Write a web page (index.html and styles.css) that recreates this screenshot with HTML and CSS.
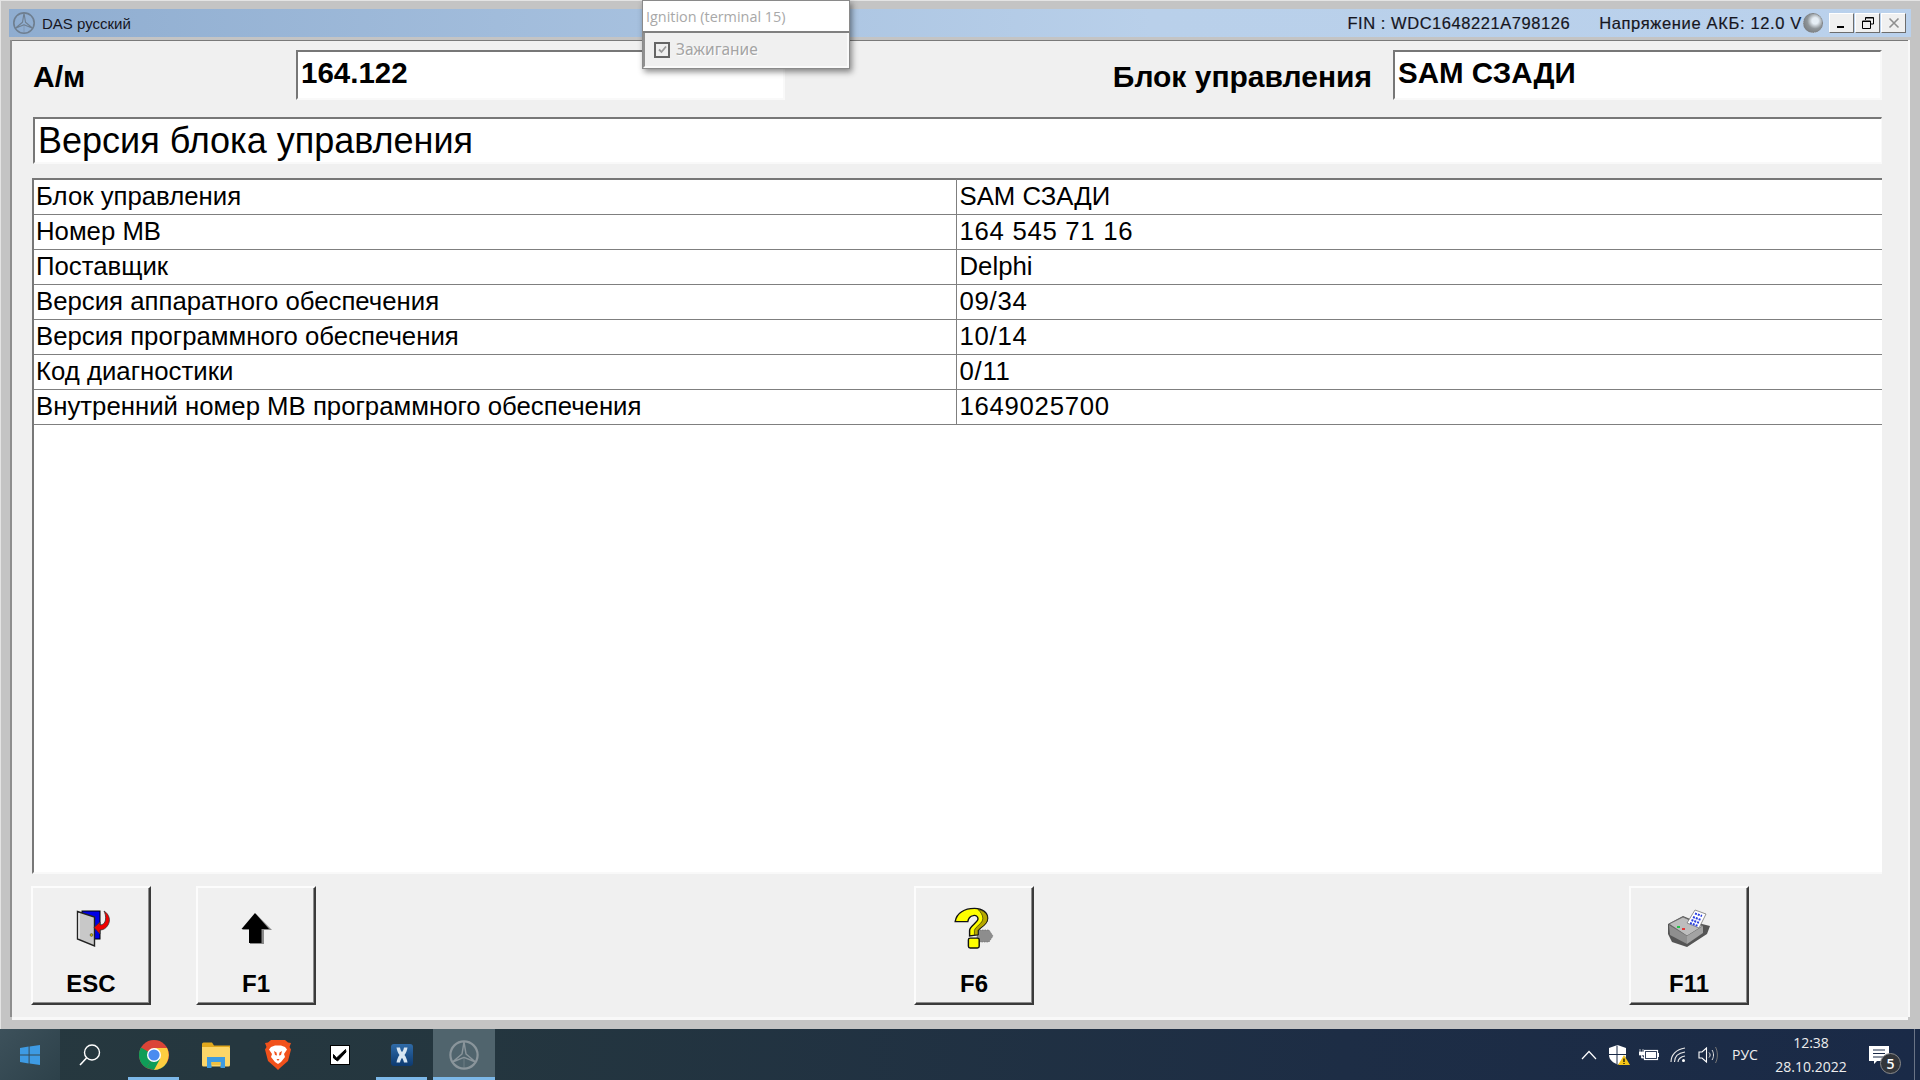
FILE: index.html
```html
<!DOCTYPE html>
<html lang="ru">
<head>
<meta charset="utf-8">
<title>DAS русский</title>
<link rel="stylesheet" href="styles.css">
</head>
<body>
<svg class="defs" width="0" height="0" aria-hidden="true">
  <defs>
    <symbol id="mb" viewBox="0 0 32 32">
      <circle cx="16" cy="16" r="13.6" fill="none" stroke="currentColor" stroke-width="2.2"/>
      <path d="M16 3 L18 15 L27.5 23 L16 18.4 L4.5 23 L14 15 Z" fill="none" stroke="currentColor" stroke-width="1.5" stroke-linejoin="round"/>
      <path d="M16 18.4 V29" stroke="currentColor" stroke-width="1" opacity=".5"/>
    </symbol>
    <linearGradient id="xblue" x1="0" y1="0" x2="0" y2="1">
      <stop offset="0" stop-color="#2f6ba8"/>
      <stop offset="1" stop-color="#0d3a70"/>
    </linearGradient>
  </defs>
</svg>
<div class="window">
  <div class="titlebar">
    <svg class="tb-logo"><use href="#mb"/></svg>
    <span class="tb-title">DAS русский</span>
    <span class="tb-fin">FIN : WDC1648221A798126</span>
    <span class="tb-volt">Напряжение АКБ: 12.0 V</span>
    <span class="tb-gear"></span>
    <div class="win-btns">
      <button class="win-btn"><svg width="12" height="12" viewBox="0 0 12 12"><rect x="1" y="9" width="7" height="2" fill="#000"/></svg></button>
      <button class="win-btn"><svg width="14" height="14" viewBox="0 0 14 14"><path d="M4.5 4V1.5H12.5V8H10M1.5 5H9.5V12.5H1.5Z M1.5 5.5H9.5 M4.5 2H12.5" fill="none" stroke="#000" stroke-width="1"/></svg></button>
      <button class="win-btn win-btn-off"><svg width="12" height="12" viewBox="0 0 12 12"><path d="M1.5 1.5L10.5 10.5M10.5 1.5L1.5 10.5" stroke="#8f8f8f" stroke-width="1.6"/></svg></button>
    </div>
  </div>

  <main class="content">
    <div class="head-row">
      <div class="head-label head-label-car">А/м</div>
      <div class="field field-car">164.122</div>
      <div class="head-label head-label-unit">Блок управления</div>
      <div class="field field-unit">SAM СЗАДИ</div>
    </div>
    <h1 class="page-title">Версия блока управления</h1>
    <div class="table-box">
      <table class="data">
        <tr><td>Блок управления</td><td>SAM СЗАДИ</td></tr>
        <tr><td>Номер MB</td><td class="num">164 545 71 16</td></tr>
        <tr><td>Поставщик</td><td>Delphi</td></tr>
        <tr><td>Версия аппаратного обеспечения</td><td class="num">09/34</td></tr>
        <tr><td>Версия программного обеспечения</td><td class="num">10/14</td></tr>
        <tr><td>Код диагностики</td><td class="num">0/11</td></tr>
        <tr><td>Внутренний номер MB программного обеспечения</td><td class="num">1649025700</td></tr>
      </table>
    </div>
    <div class="actions">
      <button class="key key-esc">
        <svg class="key-icon" viewBox="0 0 48 48">
          <rect x="15" y="7" width="18" height="28" fill="#0000e6" stroke="#000" stroke-width="1"/>
          <path d="M10.5 7.5 L27.5 13 V42 L10.5 35 Z" fill="#c8c8c8" stroke="#222" stroke-width="1.4"/>
          <path d="M12 9 V34.5" stroke="#f4f4f4" stroke-width="1.2"/>
          <circle cx="24.5" cy="31" r="1.4" fill="#c9b200" stroke="#333" stroke-width=".5"/>
          <path d="M37 7 C42 10 44 16 41 21 C39 24.5 36 26 33 26 L33 30 L27 23.5 L33 18 L33 21 C36 21 38 19 38.5 16 C39 12 38 9 37 7 Z" fill="#f00000" stroke="#333" stroke-width=".8"/>
        </svg>
        <span class="key-label">ESC</span>
      </button>
      <button class="key key-f1">
        <svg class="key-icon" viewBox="0 0 48 48">
          <path d="M24 10 L40 26 H32 V40 H18 V26 H10 Z" fill="#8a8a8a"/>
          <path d="M23 9 L37 25 H29.5 V39 H17 V25 H9.5 Z" fill="#000"/>
        </svg>
        <span class="key-label">F1</span>
      </button>
      <button class="key key-f6">
        <svg class="key-icon" viewBox="0 0 48 48">
          <path d="M27 26 H39 L43 32 L39 38 H27 Z" fill="#8d8d8d" stroke="#666" stroke-width=".6" stroke-dasharray="1.5 1"/>
          <g transform="matrix(1.2 0 0 1.1 -8 0)">
            <path d="M11 16 C12 8 19 4 27 4 C34 4 38 8 38 13 C38 19 32 21 30 24 L30 28 L23 29 L23 24 C23 20 30 17 30 13.5 C30 11 28 10 26 10.5 C23 11 22 13 21.5 16 Z" fill="#ffff00" stroke="#111" stroke-width="1.2"/>
            <path d="M30 5 C35 6 38 9 38 13 C38 19 32 21 30 24 L30 28 L27 28 L27 24 C28 20 34 18 34 13 C34 10 32 7 30 5 Z" fill="#b6a800" stroke="#111" stroke-width=".5"/>
            <rect x="22" y="31" width="9" height="9" rx="1.5" fill="#ffff00" stroke="#111" stroke-width="1.2"/>
          </g>
        </svg>
        <span class="key-label">F6</span>
      </button>
      <button class="key key-f11">
        <svg class="key-icon" viewBox="0 0 48 48">
          <path d="M3 20 L18 12 L37 20 L45 22 L42 30 L22 43 L7 38 L3 30 Z" fill="#555"/>
          <path d="M4 20 L18 13 L38 22 L22 32 Z" fill="#bdbdbd" stroke="#666" stroke-width=".8"/>
          <path d="M4 21 L22 32 V40 L5 31 Z" fill="#8f8f8f"/>
          <path d="M22 32 L38 22 L38 29 L22 40 Z" fill="#a3a3a3"/>
          <path d="M22 19 L30 6 L41 10 L34 24 Z" fill="#fff" stroke="#777" stroke-width=".8"/>
          <path d="M28 13 L36 16 M26.500 16 L34.500 19 M25 19 L33 22 M30 9.500 L37 12" stroke="#2a3fe0" stroke-width="2" stroke-dasharray="2 1"/>
          <rect x="12" y="22" width="3" height="2" fill="#25c04a"/>
          <rect x="17" y="24" width="3" height="2" fill="#e03a3a"/>
        </svg>
        <span class="key-label">F11</span>
      </button>
    </div>
  </main>

  <aside class="popup">
    <div class="popup-head">Ignition (terminal 15)</div>
    <div class="popup-body">
      <span class="popup-check"><svg width="11" height="11" viewBox="0 0 11 11"><path d="M2 5.500L4.500 8L9 2.500" fill="none" stroke="#9a9a9a" stroke-width="1.800"/></svg></span>
      <span class="popup-text">Зажигание</span>
    </div>
  </aside>
</div>

<footer class="taskbar">
  <div class="start">
    <svg width="20" height="20" viewBox="0 0 20 20"><path d="M0 2.900L8.600 1.600V9.400H0Z M9.600 1.500L20 0V9.400H9.600Z M0 10.500H8.600V18.400L0 17.100Z M9.600 10.500H20V20L9.600 18.500Z" fill="#3e9be4"/></svg>
  </div>
  <div class="tb-item tb-search">
    <svg width="24" height="24" viewBox="0 0 24 24"><circle cx="14" cy="9.500" r="7.500" fill="none" stroke="#fff" stroke-width="1.400"/><path d="M8.500 15L2 22" stroke="#fff" stroke-width="1.600"/></svg>
  </div>
  <div class="tb-item tb-open">
    <svg width="30" height="30" viewBox="0 0 30 30">
      <circle cx="15" cy="15" r="15" fill="#db4437"/>
      <path d="M15 15 L28 22.500 A15 15 0 0 1 15 30 L7.500 28 Z" fill="#0f9d58"/>
      <path d="M2 7.500 A15 15 0 0 0 7.500 28 L15 15 Z" fill="#0f9d58"/>
      <path d="M15 8 H28 A15 15 0 0 1 15 30 L21 19 Z" fill="#ffcd40"/>
      <circle cx="15" cy="15" r="7" fill="#fff"/>
      <circle cx="15" cy="15" r="5.600" fill="#4a8cf0"/>
    </svg>
  </div>
  <div class="tb-item">
    <svg width="28" height="26" viewBox="0 0 28 26">
      <path d="M0 2a1.500 1.500 0 0 1 1.500-1.500H10l2 3H28V8H0Z" fill="#e2a81c"/>
      <path d="M0 5H26.500A1.500 1.500 0 0 1 28 6.500V23a1.500 1.500 0 0 1-1.500 1.500H1.500A1.500 1.500 0 0 1 0 23Z" fill="#fdd668"/>
      <path d="M5 15H23V26H18.500V20H9.500V26H5Z" fill="#3f9be0"/>
      <rect x="9.500" y="20" width="9" height="3" fill="#f0c040"/>
    </svg>
  </div>
  <div class="tb-item">
    <svg width="26" height="30" viewBox="0 0 26 30">
      <path d="M6 0H20L23 2.500L26 3L24.500 7L26 9.500L23 21L15 28L13 30L11 28L3 21L0 9.500L1.500 7L0 3L3 2.500Z" fill="#f1511b"/>
      <path d="M6 7L10 5.500H16L20 7L22 9.500L19 14L20 17L16 22L13 24L10 22L6 17L7 14L4 9.500Z" fill="#fff"/>
      <path d="M9 11L11.500 12.500L12 15.500L10 15ZM17 11L14.500 12.500L14 15.500L16 15ZM11.500 19H14.500L13 21Z" fill="#f1511b"/>
    </svg>
  </div>
  <div class="tb-item">
    <svg width="20" height="20" viewBox="0 0 20 20">
      <rect x=".5" y=".5" width="19" height="19" fill="#fff" stroke="#000" stroke-width="1"/>
      <path d="M3.500 9.500L6.500 13L15.500 4.500L16 7L7.500 16L3.500 13Z" fill="#000" stroke="#000"/>
    </svg>
  </div>
  <div class="tb-item tb-open">
    <svg width="22" height="22" viewBox="0 0 22 22">
      <rect width="22" height="22" rx="3" fill="url(#xblue)"/>
      <path d="M5.500 3.500H9C9.500 5.500 10 7 11 8C12 7 12.500 5.500 13 3.500H16.500C16 6.500 15 9 13.500 11C15 13 16 15.500 16.500 18.500H13C12.500 16.500 12 15 11 14C10 15 9.500 16.500 9 18.500H5.500C6 15.500 7 13 8.500 11C7 9 6 6.500 5.500 3.500Z" fill="#d8e6f2"/>
    </svg>
  </div>
  <div class="tb-item tb-open tb-active">
    <svg class="tb-mb"><use href="#mb"/></svg>
  </div>

  <div class="tray">
    <div class="tray-cell"><svg width="16" height="10" viewBox="0 0 16 10"><path d="M1 9L8 1.500L15 9" fill="none" stroke="#fff" stroke-width="1.200"/></svg></div>
    <div class="tray-cell"><svg width="22" height="20" viewBox="0 0 22 20"><path d="M1 3L9.500 0L18 3V10C18 15 13.500 18 9.500 19.500C5.500 18 1 15 1 10Z" fill="#fff"/><path d="M9 0.500V19M1 9.500H18" stroke="#1a2a47" stroke-width="1"/><path d="M16 10L22 20H10Z" fill="#f5c518"/><path d="M16 13.500V17M16 18V19" stroke="#000" stroke-width="1.200"/></svg></div>
    <div class="tray-cell"><svg width="20" height="12" viewBox="0 0 20 12"><path d="M1 0V3M4 0V3M0 3H5V6H0Z M2.500 6V9H5" fill="#fff" stroke="#fff" stroke-width=".7"/><rect x="5.500" y="1.500" width="13" height="9" fill="#1a2a47" stroke="#fff" stroke-width="1.200"/><rect x="7" y="3" width="10" height="6" fill="#fff"/><rect x="19" y="4" width="1" height="4" fill="#fff"/></svg></div>
    <div class="tray-cell"><svg width="16" height="16" viewBox="0 0 16 16"><path d="M1 15C1 8 6 2.500 15 1M4.500 15C4.500 10 8 6 15 5M8 15C8 12.500 10.500 9.500 15 9" fill="none" stroke="#e8e8e8" stroke-width="1.100"/><circle cx="13.500" cy="13.500" r="1.500" fill="#fff"/></svg></div>
    <div class="tray-cell"><svg width="20" height="18" viewBox="0 0 20 18"><path d="M1 6H4L8.500 2V16L4 12H1Z" fill="none" stroke="#fff" stroke-width="1.100"/><path d="M11 6.500C12.500 8 12.500 10 11 11.500M14 4C16 7 16 11 14 14" fill="none" stroke="#e0e0e0" stroke-width="1"/><path d="M17.500 1C20 6 20 12 17.500 17" fill="none" stroke="#777" stroke-width="1"/></svg></div>
    <div class="tray-cell tray-lang">РУС</div>
    <div class="tray-cell tray-clock"><span>12:38</span><span>28.10.2022</span></div>
    <div class="tray-cell tray-note">
      <svg width="22" height="18" viewBox="0 0 22 18"><path d="M0 0H20V15H8L5 18V15H0Z" fill="#fff"/><path d="M4 4H16M4 7.500H16M4 11H16" stroke="#1a2a47" stroke-width="1"/></svg>
      <span class="note-badge">5</span>
    </div>
    <div class="tray-end"></div>
  </div>
</footer>
</body>
</html>
```

FILE: styles.css
```css
* { box-sizing: border-box; }
html, body { margin: 0; height: 100%; }
body {
  width: 1920px;
  height: 1080px;
  overflow: hidden;
  display: flex;
  flex-direction: column;
  font-family: "Liberation Sans", Arial, sans-serif;
  color: #000;
  background: #c8c8c8;
}
.defs { position: absolute; }

/* window */
.window {
  position: relative;
  flex: 0 0 1029px;
  display: flex;
  flex-direction: column;
  padding: 9px 9px 12px 9px;
  background: #c4c4c4;
  border-top: 1px solid #e4e4e4;
  border-left: 1px solid #e4e4e4;
}
.titlebar {
  flex: 0 0 28px;
  margin-top: -1px;
  margin-left: -1px;
  display: flex;
  align-items: center;
  background: linear-gradient(90deg, #8fadd0 0%, #b9d0ea 60%, #bad1ec 100%);
  font-size: 15px;
  color: #16161e;
  padding-left: 3px;
}
.tb-logo { width: 24px; height: 24px; margin-right: 6px; color: #6f7f90; flex: none; }
.tb-title { flex: 0 0 auto; padding-top: 1px; }
.tb-fin, .tb-volt {
  font-size: 16.500px;
  -webkit-text-stroke: .2px #16161e;
  padding-top: 1px;
}
.tb-fin { margin-left: auto; letter-spacing: .55px; }
.tb-volt { margin-left: 29px; letter-spacing: .65px; }
.tb-gear {
  width: 20px; height: 20px; margin-left: 1px; border-radius: 50%;
  background: radial-gradient(circle at 62% 38%, #e6eef5 0 20%, #8f9599 50%, #6f7174 100%);
  border: 1px dotted #7f7f7f;
}
.win-btns { display: flex; gap: 1px; margin-left: 6px; margin-right: 5px; }
.win-btn {
  width: 25px; height: 20px; padding: 0;
  display: flex; align-items: center; justify-content: center;
  background: #f0f0f0;
  border: 1px solid;
  border-color: #fff #6d6d6d #6d6d6d #fff;
}

/* main content */
.content {
  flex: 1;
  margin: 3px 3px 0 2px;
  display: flex;
  flex-direction: column;
  padding: 9px 26px 12px 21px;
  background: #f0f0f0;
  border-top: 1px solid #7a7a7a;
  box-shadow: -2px 0 0 #8e8e8e, 0 3px 0 #f8f8f8, 2px 0 0 #f8f8f8;
}
.head-row { display: flex; align-items: flex-start; height: 50px; }
.head-label { font-size: 30px; font-weight: 700; line-height: 34px; padding-top: 10px; }
.head-label-car { width: 263px; }
.head-label-unit { width: 608px; text-align: right; padding-right: 21px; }
.field {
  height: 50px;
  background: #fff;
  border: 2px solid;
  border-color: #777 #f9f9f9 #f9f9f9 #777;
  font-size: 29.500px;
  font-weight: 700;
  line-height: 34px;
  padding: 4px 0 0 3px;
}
.field-car { width: 489px; }
.field-unit { width: 489px; }

.page-title {
  margin: 17px 0 0;
  height: 47px;
  background: #fff;
  border: 2px solid;
  border-width: 2px 1px 2px 2px;
  border-color: #777 #f9f9f9 #f9f9f9 #777;
  font-size: 36px;
  font-weight: 400;
  line-height: 44px;
  padding-left: 3px;
}

.table-box {
  margin: 14px 0 0 -1px;
  height: 696px;
  background: #fff;
  border: 2px solid;
  border-width: 2px 0 2px 2px;
  border-color: #777 #f9f9f9 #f9f9f9 #777;
}
.data {
  width: 100%;
  margin-top: -1px;
  border-collapse: collapse;
  table-layout: fixed;
  font-size: 25.750px;
}
.data td {
  height: 35px;
  padding: 0 0 0 2px;
  border-bottom: 1px solid #7f7f7f;
  white-space: nowrap;
  line-height: 31px;
}
.data td:first-child { width: 922px; border-right: 1px solid #7f7f7f; }
.data td:last-child { padding-left: 3px; }
.data td.num { letter-spacing: .7px; }

/* function keys */
.actions { display: flex; margin-top: 12px; margin-left: -2px; height: 119px; }
.key {
  width: 120px;
  height: 119px;
  padding: 16px 0 0;
  display: flex;
  flex-direction: column;
  align-items: center;
  font-family: inherit;
  background: #f0f0f0;
  border: 2px solid;
  border-color: #fcfcfc #3a3a3a #3a3a3a #fcfcfc;
  box-shadow: inset -1px -1px 0 #8c8c8c;
}
.key-f1 { margin-left: 45px; }
.key-f6 { margin-left: 598px; }
.key-f11 { margin-left: 595px; }
.key-icon { width: 48px; height: 48px; flex: none; }
.key-label { margin-top: 18px; font-size: 24px; font-weight: 700; line-height: 28px; }

/* floating dialog */
.popup {
  position: absolute;
  left: 641px;
  top: -1px;
  width: 208px;
  height: 69px;
  display: flex;
  flex-direction: column;
  background: #f0f0f0;
  border: 1px solid #8a8a8a;
  box-shadow: 2px 3px 6px rgba(0,0,0,.45);
}
.popup-head {
  height: 32px;
  background: #fff;
  border-bottom: 2px solid #808080;
  color: #a8a8a8;
  font-family: "Open Sans", sans-serif;
  font-size: 14.400px;
  line-height: 31px;
  padding-left: 3px;
}
.popup-body {
  flex: 1;
  display: flex;
  align-items: center;
  padding-left: 9px;
  border-left: 2px solid #909090;
  border-right: 2px solid #fafafa;
  border-bottom: 2px solid #fafafa;
}
.popup-check {
  width: 16px; height: 16px;
  display: flex; align-items: center; justify-content: center;
  border: 2px solid #666;
  background: #f0f0f0;
}
.popup-text {
  margin-left: 6px;
  padding-bottom: 2px;
  color: #a4a4a4;
  font-family: "Noto Sans", sans-serif;
  font-size: 15.500px;
  text-shadow: 1px 1px 0 #fff;
}

/* taskbar */
.taskbar {
  flex: 0 0 51px;
  display: flex;
  color: #fff;
  background: linear-gradient(90deg, #26383f 0%, #24363f 25%, #1d2d45 70%, #1a2a47 100%);
}
.start {
  width: 60px;
  margin-right: 1px;
  display: flex; align-items: center; justify-content: center;
  background: linear-gradient(135deg, #3d515b, #2d414a);
}
.tb-item {
  position: relative;
  width: 62px;
  display: flex; align-items: center; justify-content: center;
}
.tb-search { padding-right: 4px; }
.tb-open::after {
  content: "";
  position: absolute;
  left: 5px; right: 6px; bottom: 0;
  height: 3px;
  background: #7cb8e8;
}
.tb-active { background: #50646d; }
.tb-active::after { left: 0; right: 0; }
.tb-mb { width: 32px; height: 32px; color: #8a959b; }

.tray {
  margin-left: auto;
  display: grid;
  grid-template-columns: 29px 31px 29px 30px 29px 46px 86px 52px 14px;
  height: 100%;
}
.tray-cell { display: flex; align-items: center; justify-content: center; }
.tray-lang { font-family: "Open Sans", sans-serif; font-size: 14px; color: #eee; }
.tray-clock {
  flex-direction: column;
  gap: 5px;
  font-family: "Open Sans", sans-serif;
  font-size: 14px;
  line-height: 19px;
  color: #eee;
}
.tray-note { position: relative; }
.note-badge {
  position: absolute;
  left: 26px; top: 24px;
  width: 21px; height: 21px;
  border-radius: 50%;
  background: #33363b;
  border: 1px solid #8a8a8a;
  font-family: "Open Sans", sans-serif;
  font-size: 14px;
  font-weight: 600;
  line-height: 19px;
  text-align: center;
}
.tray-end { border-right: 1px solid #6a7486; margin-right: 5px; }
```
